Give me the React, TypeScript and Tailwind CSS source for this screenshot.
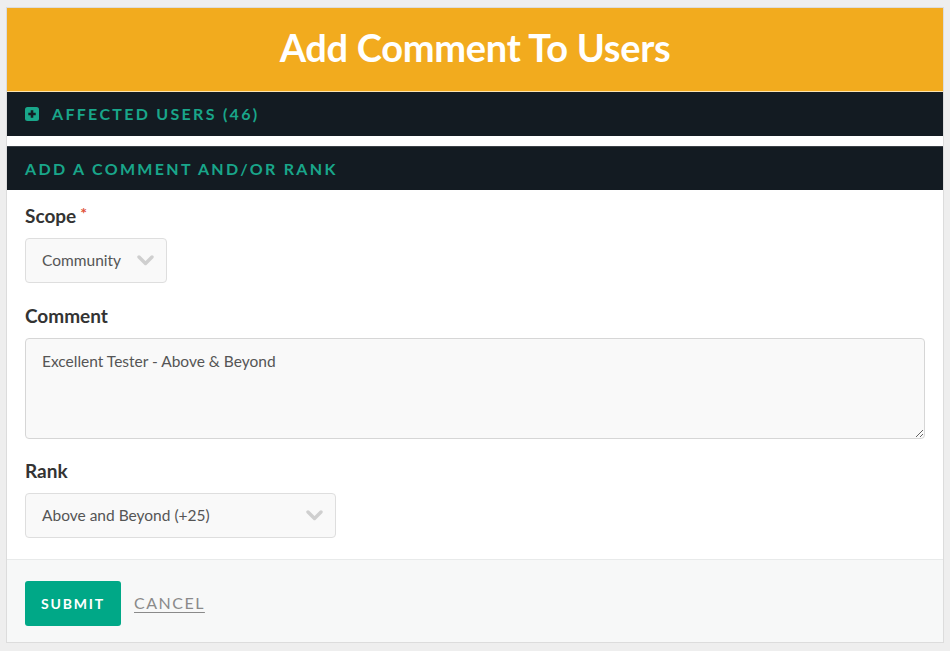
function Chevron() {
  return (
    <svg width="17" height="11" viewBox="0 0 17 11" className="shrink-0">
      <path d="M2 2 L8.5 8.5 L15 2" fill="none" stroke="#cfcfcf" strokeWidth="3.4" strokeLinecap="round" strokeLinejoin="round" />
    </svg>
  );
}

function PlusSquare() {
  return (
    <svg width="14" height="14" viewBox="0 0 14 14">
      <rect x="0" y="0" width="14" height="14" rx="2.5" fill="#19a68a" />
      <path d="M7 3.3 V10.7 M3.3 7 H10.7" stroke="#131b22" strokeWidth="2.6" />
    </svg>
  );
}

export default function App() {
  return (
    <div className="flex h-[651px] w-[950px] bg-[#eeeeee] px-[6px] pt-[7px] pb-[8px] font-['Lato','Open_Sans',sans-serif]">
      <div className="flex flex-1 flex-col border border-[#dcdcdc] bg-white">
        <div className="flex h-[84px] items-center justify-center border-b border-[#fbe3b0] bg-[#f2ab1e] pb-[6px]">
          <h1 className="text-[38px] font-bold leading-none tracking-[-0.3px] text-white">Add Comment To Users</h1>
        </div>
        <div className="flex h-[44px] items-center gap-[13px] bg-[#131b22] px-[18px]">
          <PlusSquare />
          <span className="text-[16px] font-bold tracking-[2.3px] text-[#19a68a]">AFFECTED USERS (46)</span>
        </div>
        <div className="h-[10px] bg-white" />
        <div className="flex h-[44px] items-center border-t border-[#3a4046] bg-[#131b22] px-[18px]">
          <span className="text-[16px] font-bold tracking-[2.3px] text-[#19a68a]">ADD A COMMENT AND/OR RANK</span>
        </div>
        <div className="flex flex-1 flex-col px-[18px] pt-[14px]">
          <label className="flex items-start gap-[4px] text-[19px] leading-[24px] font-bold text-[#333333]">
            Scope <span className="text-[16px] leading-[18px] text-[#e0533a]">*</span>
          </label>
          <div className="mt-[10px] flex h-[45px] w-[142px] items-center justify-between rounded-[4px] border border-[#dedede] bg-[#f9f9f9] pl-[16px] pr-[12px]">
            <span className="text-[15.5px] text-[#555555]">Community</span>
            <Chevron />
          </div>
          <label className="mt-[21px] text-[19px] leading-[24px] font-bold text-[#333333]">Comment</label>
          <textarea
            defaultValue="Excellent Tester - Above & Beyond"
            className="mt-[10px] h-[101px] w-[900px] resize-y rounded-[4px] border border-[#d6d6d6] bg-[#f9f9f9] px-[16px] py-[11px] text-[15.5px] text-[#555555] outline-none"
          />
          <label className="mt-[20px] text-[19px] leading-[24px] font-bold text-[#333333]">Rank</label>
          <div className="mt-[10px] flex h-[45px] w-[311px] items-center justify-between rounded-[4px] border border-[#dedede] bg-[#f9f9f9] pl-[16px] pr-[12px]">
            <span className="text-[15.5px] text-[#555555]">Above and Beyond (+25)</span>
            <Chevron />
          </div>
        </div>
        <div className="flex h-[83px] items-start gap-[13px] border-t border-[#e8eaea] bg-[#f7f8f8] px-[18px] pt-[21px]">
          <button className="h-[45px] w-[96px] rounded-[3px] bg-[#00a887] text-[14px] font-bold tracking-[1.8px] text-white">SUBMIT</button>
          <span className="mt-[10px] text-[16px] tracking-[1.5px] text-[#8a8a8a] underline underline-offset-[3px]">CANCEL</span>
        </div>
      </div>
    </div>
  );
}
